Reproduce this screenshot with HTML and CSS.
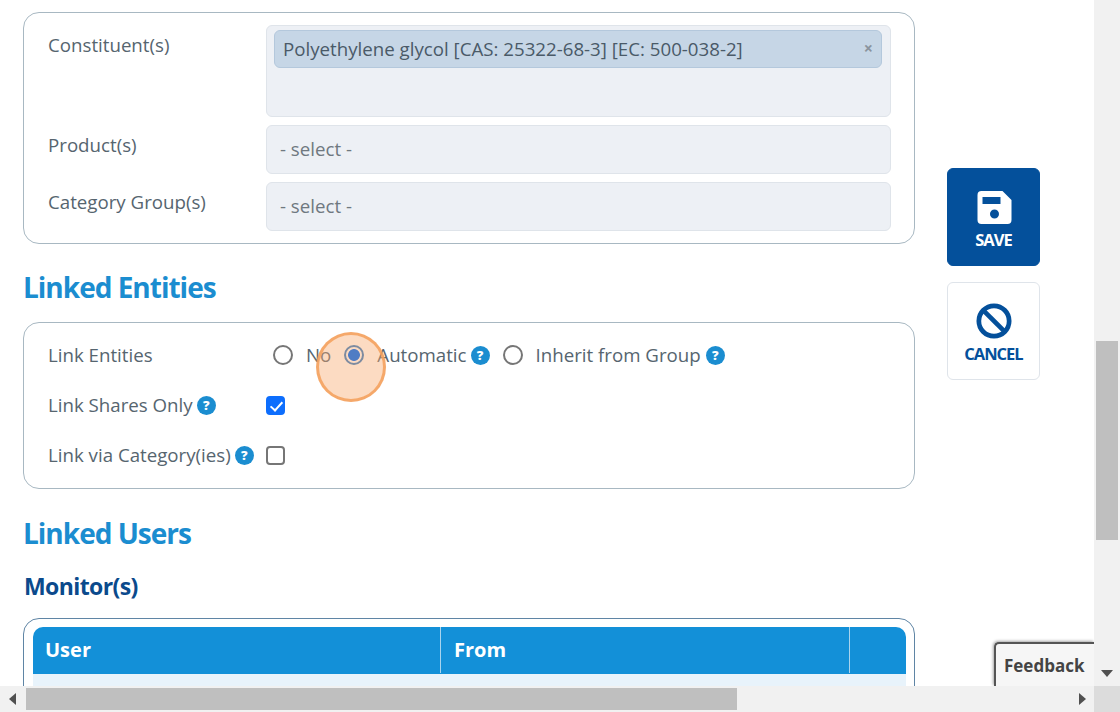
FILE: index.html
```html
<!DOCTYPE html>
<html lang="en">
<head>
<meta charset="utf-8">
<title>Linked Entities</title>
<link rel="stylesheet" href="styles.css">
</head>
<body>
<div class="window">
  <div class="viewport">
    <main class="form-col">
      <section class="card card-top">
        <div class="row row-constituent">
          <label class="label label-top">Constituent(s)</label>
          <div class="field field-multi">
            <span class="tag"><span>Polyethylene glycol [CAS: 25322-68-3] [EC: 500-038-2]</span><span class="tag-x">×</span></span>
          </div>
        </div>
        <div class="row row-select">
          <label class="label label-top">Product(s)</label>
          <div class="field field-select">- select -</div>
        </div>
        <div class="row row-select row-last">
          <label class="label label-top">Category Group(s)</label>
          <div class="field field-select">- select -</div>
        </div>
      </section>

      <h2 class="heading heading-entities">Linked Entities</h2>
      <section class="card card-entities">
        <div class="check-row">
          <span class="label">Link Entities</span>
          <div class="radios">
            <label class="opt opt-no"><input type="radio" name="link" class="radio"><span>No</span></label>
            <label class="opt opt-auto"><input type="radio" name="link" class="radio" checked><span>Automatic</span><span class="help">?</span></label>
            <label class="opt opt-inherit"><input type="radio" name="link" class="radio"><span>Inherit from Group</span><span class="help">?</span></label>
          </div>
        </div>
        <div class="check-row">
          <span class="label">Link Shares Only<span class="help">?</span></span>
          <input type="checkbox" class="check" checked>
        </div>
        <div class="check-row">
          <span class="label">Link via Category(ies)<span class="help">?</span></span>
          <input type="checkbox" class="check">
        </div>
      </section>

      <h2 class="heading heading-users">Linked Users</h2>
      <h3 class="subheading">Monitor(s)</h3>
      <section class="card card-table">
        <div class="thead">
          <div class="th th-user">User</div>
          <div class="th th-from">From</div>
          <div class="th th-end"></div>
        </div>
        <div class="tbody-row"></div>
      </section>
    </main>

    <aside class="side">
      <button class="action action-save" type="button">
        <svg class="action-icon" viewBox="0 0 36 36" aria-hidden="true"><path fill="#fff" fill-rule="evenodd" d="M5.500 2h21l9 9v20a4 4 0 0 1-4 4h-26a4 4 0 0 1-4-4V6a4 4 0 0 1 4-4zm1 6v7h18V8zm12 12.500a4.500 4.500 0 1 0 0 9 4.500 4.500 0 0 0 0-9z"/></svg>
        <span>SAVE</span>
      </button>
      <button class="action action-cancel" type="button">
        <svg class="action-icon" viewBox="0 0 38 38" aria-hidden="true"><circle cx="19" cy="19" r="16" fill="none" stroke="#04509b" stroke-width="5"/><path d="M8 8l22 22" stroke="#04509b" stroke-width="5"/></svg>
        <span>CANCEL</span>
      </button>
    </aside>

    <div class="click-marker"></div>
    <div class="feedback">Feedback</div>
  </div>

  <div class="vscroll">
    <span class="arrow arrow-up"></span>
    <div class="vtrack"><div class="vthumb"></div></div>
    <span class="arrow arrow-down"></span>
  </div>
  <div class="hscroll">
    <span class="arrow arrow-left"></span>
    <div class="htrack"><div class="hthumb"></div></div>
    <span class="arrow arrow-right"></span>
  </div>
  <div class="corner"></div>
</div>
</body>
</html>
```

FILE: styles.css
```css
* { box-sizing: border-box; }
html, body { margin: 0; height: 100%; overflow: hidden; }
body { font-family: "Open Sans", "Noto Sans", sans-serif; color: #56656f; background: #fff; }

.window {
  display: grid;
  grid-template-columns: 1094px 26px;
  grid-template-rows: 686px 26px;
  width: 1120px;
  height: 712px;
}

.viewport {
  position: relative;
  display: flex;
  overflow: hidden;
  padding: 12px 0 0 23px;
}

.form-col { flex: 0 0 892px; width: 892px; }

.card {
  border: 1px solid #a8b8c2;
  border-radius: 16px;
  background: #fff;
}

.card-top { height: 232px; padding: 12px 23px 0 24px; }

.row { display: flex; }
.row-constituent { height: 100px; }
.row-select { height: 57px; }

.label {
  display: flex;
  align-items: center;
  flex: 0 0 218px;
  width: 218px;
  font-size: 18.7px;
  line-height: 24px;
  color: #56656f;
}
.label-top { align-items: flex-start; padding-top: 8px; }

.field {
  flex: 1;
  background: #edf0f5;
  border: 1px solid #dfe4ea;
  border-radius: 6px;
  font-size: 18.7px;
}
.field-multi { height: 92px; padding: 4px 8px 4px 7px; }
.field-select {
  height: 49px;
  padding: 0 13px;
  line-height: 46px;
  color: #6f7880;
}

.tag {
  display: flex;
  align-items: center;
  justify-content: space-between;
  height: 38px;
  padding: 0 8px 2px 8px;
  background: #c6d6e6;
  border: 1px solid #b4c8dc;
  border-radius: 6px;
  color: #4a5a68;
  font-size: 18.7px;
}
.tag-x { font-size: 16px; font-weight: 700; color: #8a949e; }

.heading {
  margin: 0;
  font-size: 28px;
  line-height: 36px;
  font-weight: 700;
  letter-spacing: -1px;
  color: #1b8dd0;
}
.heading-entities { margin: 25px 0 17px 0; }
.heading-users { margin: 26px 0 20px 0; }

.subheading {
  margin: 0 0 17px 1px;
  font-size: 23px;
  line-height: 30px;
  font-weight: 700;
  letter-spacing: -0.6px;
  color: #0b4a8c;
}

.card-entities { height: 167px; padding: 7px 24px 0; }
.check-row { display: flex; align-items: center; height: 50px; }
.check-row .label { flex: 0 0 218px; }

.radios { display: flex; align-items: center; padding-left: 7px; }
.opt { display: flex; align-items: center; font-size: 18.7px; line-height: 24px; color: #56656f; }
.opt-no { margin-right: 13px; }
.opt-auto { margin-right: 13px; }

.radio {
  appearance: none;
  position: relative;
  z-index: 1;
  width: 20px;
  height: 20px;
  margin: 0 13px 0 0;
  border: 2px solid #767676;
  border-radius: 50%;
  background: transparent;
  flex: none;
}
.opt .radio:not(:checked) { background: #fff; }
.radio:checked {
  border-color: #7d8ba0;
  background: radial-gradient(circle, #4f7cc4 0 5.500px, transparent 6.300px);
}

.help {
  display: inline-flex;
  align-items: center;
  justify-content: center;
  width: 19px;
  height: 19px;
  margin-left: 4px;
  border-radius: 50%;
  background: #1b8dd0;
  color: #fff;
  font-size: 13px;
  font-weight: 800;
  line-height: 1;
}
.opt-inherit .help { margin-left: 5px; }

.check {
  appearance: none;
  position: relative;
  width: 19px;
  height: 19px;
  margin: 0;
  border: 2px solid #767676;
  border-radius: 4px;
  background: #fff;
}
.check:checked { background: #0d6efd; border-color: #0d6efd; }
.check:checked::after {
  content: "";
  position: absolute;
  left: 5px;
  top: 1px;
  width: 5px;
  height: 10px;
  border: solid #fff;
  border-width: 0 2.500px 2.500px 0;
  transform: rotate(42deg);
}

.card-table {
  height: 120px;
  padding: 8px 8px 8px 9px;
  border-color: #5f85a5;
}
.thead { display: flex; height: 47px; background: #1390d8; border-radius: 10px 10px 0 0; }
.th {
  display: flex;
  align-items: center;
  height: 46px;
  padding: 0 0 2px 12px;
  font-size: 20px;
  font-weight: 700;
  color: #fff;
  border-right: 1px solid #a8d4ee;
}
.th-user { width: 408px; }
.th-from { width: 409px; padding-left: 13px; }
.th-end { flex: 1; border-right: 0; }
.tbody-row { height: 60px; background: #e8f3fb; }

.side {
  display: flex;
  flex-direction: column;
  gap: 16px;
  margin-left: 32px;
  padding-top: 156px;
}

.action {
  display: flex;
  flex-direction: column;
  align-items: center;
  justify-content: flex-start;
  width: 93px;
  height: 98px;
  padding: 19px 0 0;
  border-radius: 6px;
  font-family: inherit;
  font-size: 16.5px;
  line-height: 22px;
  font-weight: 700;
  letter-spacing: -1px;
}
.action-save { background: #04509b; border: 1px solid #04509b; color: #fff; }
.action-cancel { background: #fff; border: 1px solid #dfe4ea; color: #04509b; }
.action-icon { width: 36px; height: 38px; margin-bottom: 3px; }

.click-marker {
  position: absolute;
  left: 316px;
  top: 332px;
  width: 70px;
  height: 70px;
  border: 3px solid rgba(245, 160, 90, 0.85);
  border-radius: 50%;
  background: rgba(248, 170, 110, 0.42);
}

.feedback {
  position: absolute;
  right: 0;
  bottom: 0;
  width: 100px;
  height: 44px;
  padding: 11px 0 0 8px;
  background: #f6f6f6;
  border: 1px solid #555;
  border-width: 2px 0 0 2px;
  border-radius: 5px 0 0 0;
  box-shadow: -1px -1px 3px rgba(0, 0, 0, 0.35);
  font-size: 17px;
  line-height: 22px;
  font-weight: 700;
  color: #444;
}

.vscroll, .hscroll { display: flex; background: #f1f1f1; }
.vscroll { flex-direction: column; }
.vtrack { flex: 1; padding: 0 2px; }
.vthumb { width: 22px; height: 199px; margin-top: 315px; background: #bfbfbf; }
.htrack { flex: 1; padding: 2px 0; }
.hthumb { width: 711px; height: 22px; background: #bfbfbf; }
.hscroll { align-items: stretch; }
.corner { background: #dcdcdc; }

.arrow { position: relative; flex: 0 0 26px; width: 26px; height: 26px; }
.arrow::after { content: ""; position: absolute; border: 6px solid transparent; }
.arrow-down::after { left: 7px; top: 10px; border-top: 7px solid #505050; border-bottom: 0; }
.arrow-up::after { display: none; }
.arrow-left::after { left: 9px; top: 7px; border-right: 7px solid #505050; border-left: 0; }
.arrow-right::after { left: 15px; top: 7px; border-left: 7px solid #505050; border-right: 0; }
.hscroll .arrow-right { flex-basis: 30px; width: 30px; }
```
